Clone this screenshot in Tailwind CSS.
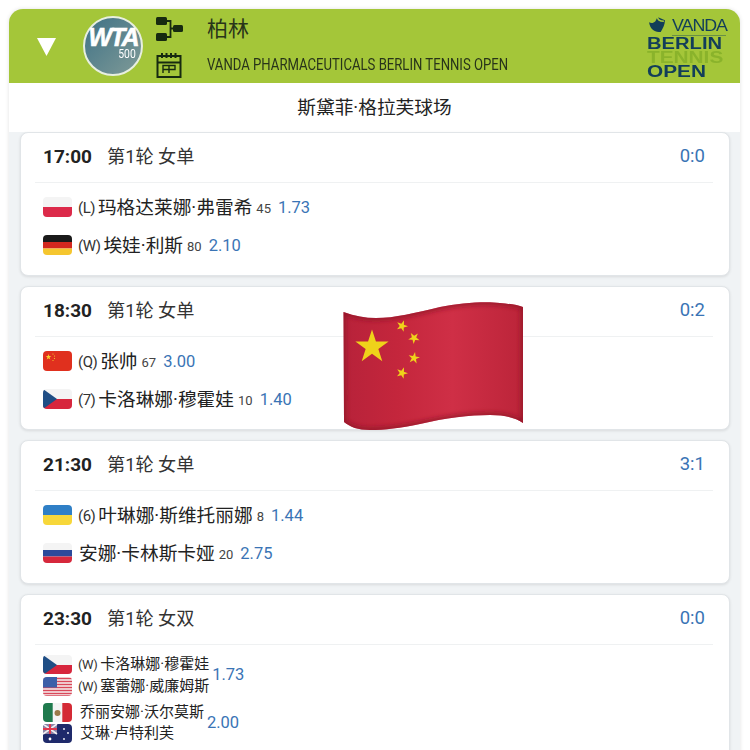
<!DOCTYPE html>
<html lang="zh">
<head>
  <meta charset="UTF-8">
  <title>柏林</title>
  <script src="https://cdn.jsdelivr.net/npm/@tailwindcss/browser@4"></script>
</head>
<body class="bg-white font-['Roboto','Noto_Sans_CJK_SC',sans-serif] text-[#222]">
  <svg width="0" height="0" class="absolute">
    <defs>
      <polygon id="star" points="0,-1 .225,-.309 .951,-.309 .363,.118 .588,.809 0,.382 -.588,.809 -.363,.118 -.951,-.309 -.225,-.309"/>
      <g id="f-pl"><rect width="29" height="20" fill="#f4f4f4"/><rect y="10" width="29" height="10" fill="#dc2a4a"/></g>
      <g id="f-de"><rect width="29" height="7" fill="#1a1a1a"/><rect y="7" width="29" height="6.5" fill="#d2281f"/><rect y="13.5" width="29" height="6.5" fill="#f5c62f"/></g>
      <g id="f-cn"><rect width="29" height="20" fill="#e0301e"/><use href="#star" transform="translate(5.5,6) scale(3)" fill="#f8d22c"/><circle cx="10" cy="3" r=".6" fill="#f8d22c"/><circle cx="11.5" cy="5" r=".6" fill="#f8d22c"/><circle cx="11.5" cy="7.5" r=".6" fill="#f8d22c"/><circle cx="10" cy="9.5" r=".6" fill="#f8d22c"/></g>
      <g id="f-cz"><rect width="29" height="20" fill="#f4f4f4"/><rect y="10" width="29" height="10" fill="#d7263d"/><polygon points="0,0 14,10 0,20" fill="#1f4e85"/></g>
      <g id="f-ua"><rect width="29" height="10" fill="#2f7fc6"/><rect y="10" width="29" height="10" fill="#f7d73a"/></g>
      <g id="f-ru"><rect width="29" height="7" fill="#f4f4f4"/><rect y="7" width="29" height="6.5" fill="#2b4a9b"/><rect y="13.5" width="29" height="6.5" fill="#d6283c"/></g>
      <g id="f-us"><rect width="29" height="20" fill="#f6f2f2"/><path d="M0 1.5h29M0 4.5h29M0 7.5h29M0 10.5h29M0 13.5h29M0 16.5h29M0 19h29" stroke="#d9485a" stroke-width="1.5"/><rect width="14" height="10.5" fill="#3d5fa8"/></g>
      <g id="f-mx"><rect width="29" height="20" fill="#f4f4f4"/><rect width="9.7" height="20" fill="#1f7a4d"/><rect x="19.3" width="9.7" height="20" fill="#d42a35"/><circle cx="14.5" cy="10" r="3" fill="#9a7a4a"/></g>
      <g id="f-au"><rect width="29" height="20" fill="#1f2a6b"/><rect width="14" height="10" fill="#8d86a8"/><path d="M0 0l14 10M14 0L0 10" stroke="#f3eef2" stroke-width="1.6"/><path d="M7 0v10M0 5h14" stroke="#e0384d" stroke-width="2"/><circle cx="21" cy="5" r=".9" fill="#fff"/><circle cx="25" cy="9" r=".9" fill="#fff"/><circle cx="21" cy="15" r=".9" fill="#fff"/><circle cx="7" cy="15" r="1.4" fill="#fff"/></g>
      <linearGradient id="wave" x1="0" x2="1" y1="0" y2="0">
        <stop offset="0" stop-color="#b7223a"/><stop offset=".3" stop-color="#c4263c"/><stop offset=".6" stop-color="#cf2f46"/><stop offset="1" stop-color="#bb2439"/>
      </linearGradient>
      <filter id="soft" x="-10%" y="-10%" width="120%" height="120%"><feGaussianBlur stdDeviation="2.5"/></filter>
      <clipPath id="wave-clip"><path d="M343.500 312C355 316 365 318 376 318C395 318 415 313 440 307C460 303 485 301 500 303C510 304 518 305 523 307L523 423C515 418 505 415 490 415C470 415 445 418 420 424C400 428 385 430 370 430C358 430 350 427 344 422Z"/></clipPath>
    </defs>
  </svg>

  <div class="relative h-[750px] w-[750px] overflow-hidden pt-[9px] pl-[9px] pr-[10px]">
    <div class="h-[800px] rounded-t-[14px] bg-[#f0f3f5] shadow-[0_0_4px_rgba(0,0,0,.12)]">
      <!-- Header -->
      <header class="flex h-[74px] items-center rounded-t-[14px] bg-[#a4c639] pl-[28px] pr-[11px]">
        <svg width="19" height="18" viewBox="0 0 19 18" class="mt-[2px] mr-[27px] shrink-0"><polygon points="0,0 19,0 9.500,18" fill="#fff"/></svg>
        <div class="relative flex h-[60px] w-[60px] shrink-0 flex-col items-center justify-center rounded-full border-2 border-[#e8efe0] bg-[linear-gradient(135deg,#3f7286,#7f9a97)] text-white">
          <span class="mt-[-7px] font-['Liberation_Sans'] text-[25px] leading-[24px] font-bold tracking-[-2px] italic [-webkit-text-stroke:0.6px_white]">WTA</span>
          <span class="ml-[27px] mt-[-1px] scale-x-[0.8] text-[13px] leading-[12px]">500</span>
        </div>
        <div class="ml-[13px] flex h-full w-[26px] shrink-0 flex-col items-center justify-center gap-[10px] pt-[1px]">
          <svg width="28" height="26" viewBox="0 0 28 26" fill="none">
            <rect x="1" y="1" width="11" height="8" rx="1.5" fill="#172a10"/>
            <rect x="1" y="17" width="11" height="8" rx="1.5" fill="#172a10"/>
            <rect x="18" y="9" width="10" height="7" rx="1.5" fill="#172a10"/>
            <path d="M12 5h3.5v16H12M15.5 12.5H18" stroke="#172a10" stroke-width="1.8"/>
          </svg>
          <svg width="26" height="26" viewBox="0 0 26 26" fill="none" stroke="#172a10" stroke-width="2">
            <rect x="1.500" y="4" width="23" height="21"/>
            <path d="M1 10.500h24M6 1v5M10.500 1v5M15 1v5M19.500 1v5"/>
            <path d="M7 21v-7.500h12v4H7M13 13.500V21" stroke-width="1.400"/>
          </svg>
        </div>
        <div class="ml-[25px] flex h-full min-w-0 flex-1 flex-col pt-[6px]">
          <div class="text-[21px] leading-[28px] text-[#28341a]">柏林</div>
          <div class="mt-[12px] origin-left scale-x-[0.82] whitespace-nowrap text-[16px] leading-[20px] text-[#28341a]">VANDA PHARMACEUTICALS BERLIN TENNIS OPEN</div>
        </div>
        <!-- Tournament logo -->
        <div class="flex h-full w-[82px] shrink-0 flex-col pt-[7px] font-['Liberation_Sans'] font-bold">
          <div class="flex h-[18px] items-center">
            <svg width="20" height="18" viewBox="0 0 17 17" class="shrink-0"><path d="M1 6c2 1 4 1 6-1l2-4 7 3c0 4-2 8-4 11-5 1-10-2-11-9z" fill="#123e59"/><path d="M9 1c0 2 1 4 6 4" stroke="#a4c639" stroke-width="1.500" fill="none"/></svg>
            <span class="ml-[5px] origin-left scale-x-[1.05] text-[17px] leading-[17px] font-normal tracking-[-1px] text-[#123e59]">VANDA</span>
          </div>
          <div class="mt-[1px] ml-[25px] h-[1px] w-[54px] bg-[#123e59]/40"></div>
          <div class="mt-[1px] origin-left scale-x-[1.26] text-[16px] leading-[14px] whitespace-nowrap text-[#123e59]">BERLIN</div>
          <div class="origin-left scale-x-[1.3] text-[16px] leading-[13.500px] whitespace-nowrap text-[#8ab32b]">TENNIS</div>
          <div class="origin-left scale-x-[1.3] text-[16px] leading-[13.500px] whitespace-nowrap text-[#123e59]">OPEN</div>
        </div>
      </header>

      <div class="flex h-[49px] items-center justify-center bg-white pt-[2px] text-[18.700px] text-[#222]">斯黛菲·格拉芙球场</div>

      <!-- Matches -->
      <main class="flex flex-col gap-[10px] pl-[11px] pr-[10px]">
        <section class="h-[144px] rounded-[8px] border border-[#e1e5e8] bg-white pl-[22px] pr-[24px] shadow-[0_1px_3px_rgba(0,0,0,.1)]">
          <div class="-mx-[8px] flex h-[50px] items-center border-b border-[#eff1f2] px-[8px] pb-[1px]">
            <span class="w-[64px] text-[19px] font-bold">17:00</span><span class="text-[18.200px] text-[#333]">第1轮 女单</span>
            <span class="ml-auto text-[18.500px] text-[#3a74b5]">0:0</span>
          </div>
          <div class="mt-[6px] flex h-[38px] items-center pt-[1px]"><svg width="29" height="20" class="-mt-[3px] shrink-0 rounded-[4px]"><use href="#f-pl"/></svg><span class="ml-[6px] text-[15px] tracking-[-0.5px] text-[#333]">(L)</span><span class="ml-[3px] text-[18.700px]">玛格达莱娜·弗雷希</span><span class="ml-[4px] text-[13px] text-[#444]">45</span><span class="ml-[7px] text-[16.500px] text-[#3a74b5]">1.73</span></div>
          <div class="flex h-[38px] items-center pt-[1px]"><svg width="29" height="20" class="-mt-[3px] shrink-0 rounded-[4px]"><use href="#f-de"/></svg><span class="ml-[6px] text-[15px] tracking-[-0.5px] text-[#333]">(W)</span><span class="ml-[3px] text-[18.700px]">埃娃·利斯</span><span class="ml-[4px] text-[13px] text-[#444]">80</span><span class="ml-[7px] text-[16.500px] text-[#3a74b5]">2.10</span></div>
        </section>

        <section class="h-[144px] rounded-[8px] border border-[#e1e5e8] bg-white pl-[22px] pr-[24px] shadow-[0_1px_3px_rgba(0,0,0,.1)]">
          <div class="-mx-[8px] flex h-[50px] items-center border-b border-[#eff1f2] px-[8px] pb-[1px]">
            <span class="w-[64px] text-[19px] font-bold">18:30</span><span class="text-[18.200px] text-[#333]">第1轮 女单</span>
            <span class="ml-auto text-[18.500px] text-[#3a74b5]">0:2</span>
          </div>
          <div class="mt-[6px] flex h-[38px] items-center pt-[1px]"><svg width="29" height="20" class="-mt-[3px] shrink-0 rounded-[4px]"><use href="#f-cn"/></svg><span class="ml-[6px] text-[15px] tracking-[-0.5px] text-[#333]">(Q)</span><span class="ml-[3px] text-[18.700px]">张帅</span><span class="ml-[4px] text-[13px] text-[#444]">67</span><span class="ml-[7px] text-[16.500px] text-[#3a74b5]">3.00</span></div>
          <div class="flex h-[38px] items-center pt-[1px]"><svg width="29" height="20" class="-mt-[3px] shrink-0 rounded-[4px]"><use href="#f-cz"/></svg><span class="ml-[6px] text-[15px] tracking-[-0.5px] text-[#333]">(7)</span><span class="ml-[3px] text-[18.700px]">卡洛琳娜·穆霍娃</span><span class="ml-[4px] text-[13px] text-[#444]">10</span><span class="ml-[7px] text-[16.500px] text-[#3a74b5]">1.40</span></div>
        </section>

        <section class="h-[144px] rounded-[8px] border border-[#e1e5e8] bg-white pl-[22px] pr-[24px] shadow-[0_1px_3px_rgba(0,0,0,.1)]">
          <div class="-mx-[8px] flex h-[50px] items-center border-b border-[#eff1f2] px-[8px] pb-[1px]">
            <span class="w-[64px] text-[19px] font-bold">21:30</span><span class="text-[18.200px] text-[#333]">第1轮 女单</span>
            <span class="ml-auto text-[18.500px] text-[#3a74b5]">3:1</span>
          </div>
          <div class="mt-[6px] flex h-[38px] items-center pt-[1px]"><svg width="29" height="20" class="-mt-[3px] shrink-0 rounded-[4px]"><use href="#f-ua"/></svg><span class="ml-[6px] text-[15px] tracking-[-0.5px] text-[#333]">(6)</span><span class="ml-[3px] text-[18.700px]">叶琳娜·斯维托丽娜</span><span class="ml-[4px] text-[13px] text-[#444]">8</span><span class="ml-[7px] text-[16.500px] text-[#3a74b5]">1.44</span></div>
          <div class="flex h-[38px] items-center pt-[1px]"><svg width="29" height="20" class="-mt-[3px] shrink-0 rounded-[4px]"><use href="#f-ru"/></svg><span class="ml-[7px] text-[18.700px]">安娜·卡林斯卡娅</span><span class="ml-[4px] text-[13px] text-[#444]">20</span><span class="ml-[7px] text-[16.500px] text-[#3a74b5]">2.75</span></div>
        </section>

        <section class="h-[170px] rounded-[8px] border border-[#e1e5e8] bg-white pl-[22px] pr-[24px] shadow-[0_1px_3px_rgba(0,0,0,.1)]">
          <div class="-mx-[8px] flex h-[50px] items-center border-b border-[#eff1f2] px-[8px] pb-[1px]">
            <span class="w-[64px] text-[19px] font-bold">23:30</span><span class="text-[18.200px] text-[#333]">第1轮 女双</span>
            <span class="ml-auto text-[18.500px] text-[#3a74b5]">0:0</span>
          </div>
          <div class="mt-[10px] flex items-center">
            <div class="flex flex-col gap-[3px]">
              <div class="flex h-[19px] items-center"><svg width="29" height="19" class="shrink-0 rounded-[4px]"><use href="#f-cz"/></svg><span class="ml-[6px] text-[13px] tracking-[-0.5px] text-[#333]">(W)</span><span class="ml-[3px] text-[15px]">卡洛琳娜·穆霍娃</span></div>
              <div class="flex h-[19px] items-center"><svg width="29" height="19" class="shrink-0 rounded-[4px]"><use href="#f-us"/></svg><span class="ml-[6px] text-[13px] tracking-[-0.5px] text-[#333]">(W)</span><span class="ml-[3px] text-[15px]">塞蕾娜·威廉姆斯</span></div>
            </div>
            <span class="ml-[3px] text-[16.500px] text-[#3a74b5]">1.73</span>
          </div>
          <div class="mt-[7px] flex items-center">
            <div class="flex flex-col gap-[2px]">
              <div class="flex h-[19px] items-center"><svg width="29" height="19" class="shrink-0 rounded-[4px]"><use href="#f-mx"/></svg><span class="ml-[8px] text-[15px]">乔丽安娜·沃尔莫斯</span></div>
              <div class="flex h-[19px] items-center"><svg width="29" height="19" class="shrink-0 rounded-[4px]"><use href="#f-au"/></svg><span class="ml-[8px] text-[15px]">艾琳·卢特利芙</span></div>
            </div>
            <span class="ml-[3px] text-[16.500px] text-[#3a74b5]">2.00</span>
          </div>
        </section>
      </main>
    </div>

    <!-- Waving flag over the list -->
    <svg class="absolute top-[300px] left-[342px]" width="184" height="132" viewBox="342 300 184 132">
      <g clip-path="url(#wave-clip)">
        <rect x="342" y="300" width="184" height="132" fill="url(#wave)"/>
        <path d="M343.500 312C355 316 365 318 376 318C395 318 415 313 440 307C460 303 485 301 500 303C510 304 518 305 523 307L523 423C515 418 505 415 490 415C470 415 445 418 420 424C400 428 385 430 370 430C358 430 350 427 344 422Z" fill="none" stroke="#8f1426" stroke-width="4" filter="url(#soft)"/>
      </g>
      <use href="#star" transform="translate(372,347) scale(17.500)" fill="#efd21a"/>
      <use href="#star" transform="translate(402,326) rotate(20) scale(6)" fill="#efd21a"/>
      <use href="#star" transform="translate(414,338) rotate(40) scale(6)" fill="#efd21a"/>
      <use href="#star" transform="translate(414,358) rotate(10) scale(6)" fill="#efd21a"/>
      <use href="#star" transform="translate(402,373) rotate(20) scale(6)" fill="#efd21a"/>
    </svg>
  </div>
</body>
</html>
